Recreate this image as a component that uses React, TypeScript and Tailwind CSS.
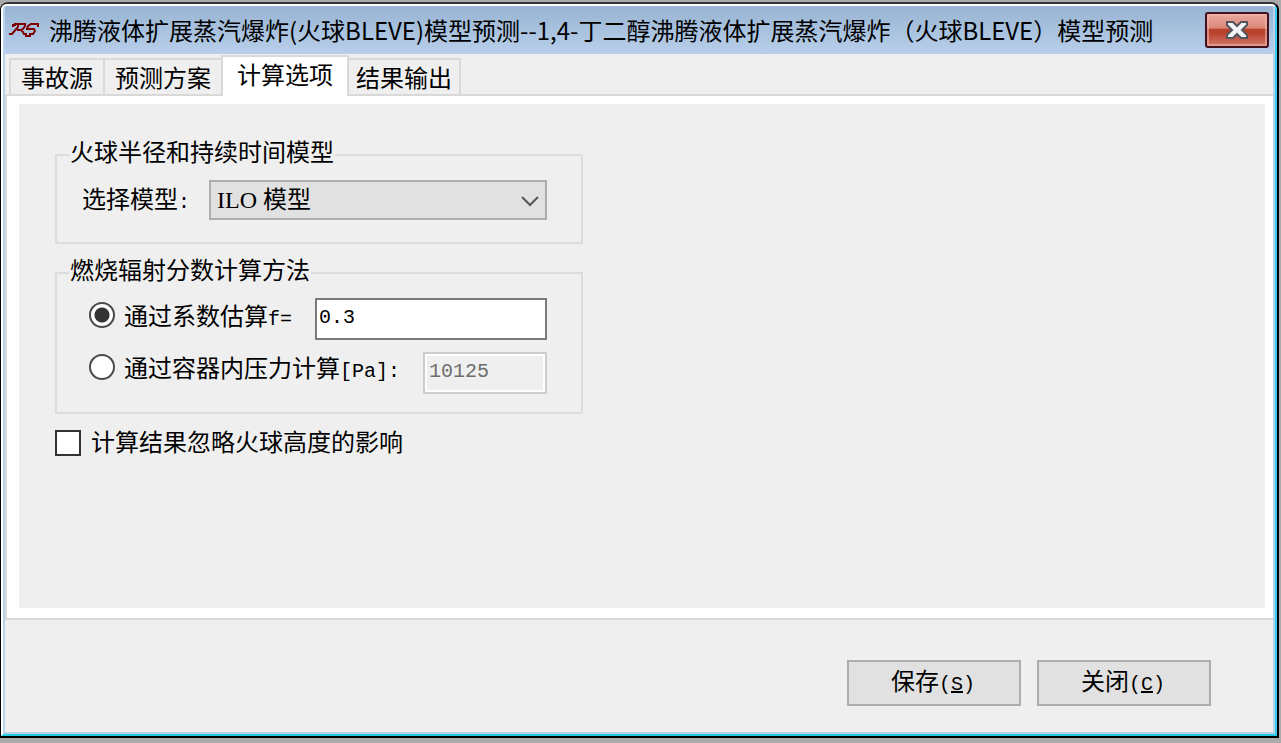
import { useState } from 'react'

const tabs = [
  { label: '事故源', className: 'h-[36px] border-2 border-b-0 px-2.5' },
  { label: '预测方案', className: 'h-[36px] border-t-2 px-2.5' },
  { label: '计算选项', className: 'h-[41px] -mb-[2px] border-2 border-b-0 px-3.5 pb-1.5 bg-white' },
  { label: '结果输出', className: 'h-[36px] border-t-2 border-r-2 px-[7px]' },
]

const mono = 'font-["Liberation_Mono",monospace] text-[20px]'

function Logo() {
  return (
    <svg width="30" height="18" viewBox="0 0 30 18" fill="none" stroke="#800000" strokeWidth="2" className="shrink-0" aria-hidden="true">
      <path d="M4 6V4h2V3h10v2l-2 3-2 1H8M9 4v2L3 13H0M12 9l2 2 1 2h3" />
      <path d="M29 6V3h-7l-3 2-1 3h7l1 2-2 3h-3v2h-5" />
    </svg>
  )
}

function TitleBar() {
  return (
    <header className="flex h-12 items-center bg-linear-to-b from-[#98b4d2] to-[#b8cfea] pl-1 pr-1">
      <Logo />
      <h1 className="ml-2.5 flex-1 whitespace-nowrap text-[24px] leading-[32px]">
        沸腾液体扩展蒸汽爆炸(火球BLEVE)模型预测--1,4-丁二醇沸腾液体扩展蒸汽爆炸（火球BLEVE）模型预测
      </h1>
      <button
        aria-label="关闭窗口"
        className="flex h-9 w-16 shrink-0 items-center justify-center rounded-[3px] border-2 border-[#43101f] bg-[linear-gradient(#e9aa9e,#dc8676_45%,#b8402a_46%,#b9432d_60%,#d0796a)] shadow-[inset_0_0_0_2px_#eeb5aa99]"
      >
        <svg width="22" height="18" viewBox="0 0 22 18" aria-hidden="true">
          <path d="M1 1h6l4 4 4-4h6v3l-5 5 5 5v3h-6l-4-4-4 4H1v-3l5-5-5-5z" fill="#f4f4f4" stroke="#53555f" strokeWidth="2" />
        </svg>
      </button>
    </header>
  )
}

export default function App() {
  const [active, setActive] = useState('计算选项')
  const [method, setMethod] = useState('factor')
  const [factor, setFactor] = useState('0.3')
  const [ignoreHeight, setIgnoreHeight] = useState(false)

  const radio =
    'size-[26px] shrink-0 appearance-none rounded-full border-2 border-[#4a4a4a] bg-white checked:bg-[radial-gradient(circle,#333_0_7px,#fff_8px)]'

  return (
    <div className="flex min-h-screen flex-col bg-[#ababab] pt-0.5 pr-0.5 pb-[5px] font-['Noto_Sans_CJK_SC',sans-serif] text-[24px] leading-[28px] text-black">
      <div className="flex flex-1 flex-col rounded-t-[8px] border-2 border-l border-black border-t-[#333539] bg-white">
        <div className="flex flex-1 flex-col overflow-hidden rounded-t-[6px] border-2 border-white border-r-[#35cbee] border-b-[#25cbe0]">
          <div className="flex flex-1 flex-col border-2 border-t-0 border-[#b9d0eb]">
            <TitleBar />

            {/* Tabs */}
            <div role="tablist" className="flex h-[42px] items-end border-b-2 border-[#d9d9d9] bg-[#efefef] pl-1">
              {tabs.map(t => (
                <button
                  key={t.label}
                  role="tab"
                  aria-selected={active === t.label}
                  onClick={() => setActive(t.label)}
                  className={`whitespace-nowrap border-[#d9d9d9] ${t.className}`}
                >
                  {t.label}
                </button>
              ))}
            </div>

            {/* Tab page */}
            <main className="flex flex-1 flex-col border-b-2 border-l-2 border-[#d9d9d9] bg-white pt-2 pr-2 pb-2.5 pl-3">
              <div className="flex-1 bg-[#efefef] px-9 pt-[35px]">
                <fieldset className="w-[528px] border-2 border-[#dcdcdc] pr-[34px] pb-[22px] pl-[25px]">
                  <legend className="-ml-[13px] px-px pb-2 leading-[24px]">火球半径和持续时间模型</legend>
                  <div className="flex items-center gap-[19px] pt-[9px]">
                    <label htmlFor="model" className="whitespace-nowrap">
                      选择模型<span className={mono}>:</span>
                    </label>
                    <div className="relative flex-1">
                      <select
                        id="model"
                        className="block h-10 w-full appearance-none border-2 border-[#adadad] bg-[#e1e1e1] pl-1.5 font-['Liberation_Serif','Noto_Sans_CJK_SC',serif] leading-[28px]"
                      >
                        <option>ILO 模型</option>
                      </select>
                      <svg width="18" height="12" viewBox="0 0 18 12" fill="none" stroke="#555" strokeWidth="2" className="pointer-events-none absolute top-4 right-2" aria-hidden="true">
                        <path d="M1 1l8 8 8-8" />
                      </svg>
                    </div>
                  </div>
                </fieldset>

                <fieldset className="mt-[13px] w-[528px] border-2 border-[#dcdcdc] pr-[34px] pb-[18px] pl-8">
                  <legend className="-ml-5 px-px pb-2 leading-[24px]">燃烧辐射分数计算方法</legend>
                  <div className="flex items-start pt-[9px]">
                    <input id="by-factor" type="radio" name="method" className={`mt-1 ${radio}`} checked={method === 'factor'} onChange={() => setMethod('factor')} />
                    <label htmlFor="by-factor" className="mt-[3px] mr-[23px] ml-[9px] whitespace-nowrap">
                      通过系数估算<span className={mono}>f=</span>
                    </label>
                    <input
                      aria-label="系数 f"
                      value={factor}
                      onChange={e => setFactor(e.target.value)}
                      className={`h-[42px] w-0 flex-1 border-2 border-[#7a7a7a] bg-white px-0.5 pb-1 ${mono}`}
                    />
                  </div>
                  <div className="flex items-start pt-3">
                    <input id="by-pressure" type="radio" name="method" className={`mt-0.5 ${radio}`} checked={method === 'pressure'} onChange={() => setMethod('pressure')} />
                    <label htmlFor="by-pressure" className="mt-px mr-[23px] ml-[9px] whitespace-nowrap">
                      通过容器内压力计算<span className={mono}>[Pa]:</span>
                    </label>
                    <input
                      aria-label="容器内压力"
                      defaultValue="10125"
                      disabled={method !== 'pressure'}
                      className={`h-[42px] w-0 flex-1 border-2 border-[#cccccc] bg-[#efefef] px-1 pb-1 text-[#6d6d6d] shadow-[inset_0_0_0_2px_#fff] ${mono}`}
                    />
                  </div>
                </fieldset>

                <div className="mt-[13px] flex items-center">
                  <input
                    id="ignore-height"
                    type="checkbox"
                    checked={ignoreHeight}
                    onChange={e => setIgnoreHeight(e.target.checked)}
                    className="size-[26px] appearance-none border-2 border-[#333] bg-white checked:bg-[#333]"
                  />
                  <label htmlFor="ignore-height" className="ml-2.5 whitespace-nowrap pb-1">计算结果忽略火球高度的影响</label>
                </div>
              </div>
            </main>

            {/* Footer */}
            <footer className="flex justify-end gap-4 bg-[#efefef] pt-10 pr-[62px] pb-[26px]">
              <button className="h-[46px] w-[174px] border-2 border-[#adadad] bg-[#e1e1e1] pr-0.5 pb-0.5">
                保存<span className={mono}>(<u>S</u>)</span>
              </button>
              <button className="h-[46px] w-[174px] border-2 border-[#adadad] bg-[#e1e1e1] pr-0.5 pb-0.5">
                关闭<span className={mono}>(<u>C</u>)</span>
              </button>
            </footer>
          </div>
        </div>
      </div>
    </div>
  )
}
